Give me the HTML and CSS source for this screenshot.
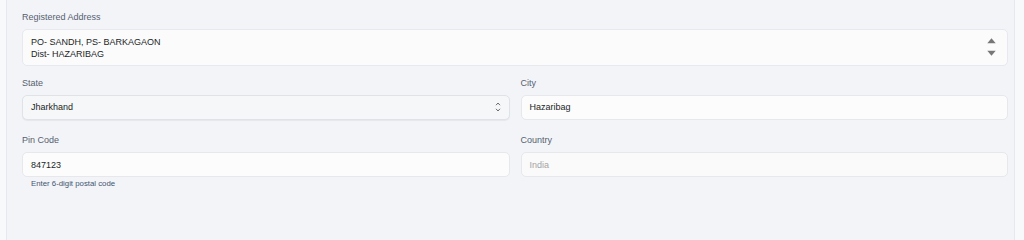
FILE: index.html
```html
<!DOCTYPE html>
<html lang="en">
<head>
<meta charset="utf-8">
<title>Address</title>
<link rel="stylesheet" href="styles.css">
</head>
<body>
<div class="panel">
  <div class="group g-first">
    <div class="label">Registered Address</div>
    <div class="textarea">
      <div class="ta-text">PO- SANDH, PS- BARKAGAON<br>Dist- HAZARIBAG</div>
      <svg class="ta-arrows" width="9" height="18" viewBox="0 0 9 18" aria-hidden="true">
        <polygon points="0.3,5.2 4.5,0.3 8.7,5.2" fill="#777"/>
        <polygon points="0.3,12.8 8.7,12.8 4.5,17.7" fill="#777"/>
      </svg>
    </div>
  </div>
  <div class="row g-second">
    <div class="group">
      <div class="label">State</div>
      <div class="select">
        <span>Jharkhand</span>
        <svg class="chev" width="6" height="12" viewBox="0 0 6 12" aria-hidden="true">
          <polyline points="1,4.2 3,2 5,4.2" fill="none" stroke="#5a5a5a" stroke-width="0.9"/>
          <polyline points="1,7.8 3,10 5,7.8" fill="none" stroke="#5a5a5a" stroke-width="0.9"/>
        </svg>
      </div>
    </div>
    <div class="group">
      <div class="label">City</div>
      <div class="input">Hazaribag</div>
    </div>
  </div>
  <div class="row">
    <div class="group">
      <div class="label">Pin Code</div>
      <div class="input">847123</div>
      <div class="help">Enter 6-digit postal code</div>
    </div>
    <div class="group">
      <div class="label">Country</div>
      <div class="input disabled">India</div>
    </div>
  </div>
</div>
</body>
</html>
```
FILE: styles.css
```css
html, body {
  margin: 0;
  padding: 0;
  background: #f8f9fb;
}
body {
  font-family: "Liberation Sans", Arial, sans-serif;
}
.panel {
  margin-left: 6px;
  width: 986px;
  min-height: 100vh;
  box-sizing: content-box;
  padding: 11.5px 6px 0 15px;
  background: #f3f4f8;
  border-left: 1px solid #e6e8ed;
  border-right: 1px solid #e6e8ed;
}
.g-first {
  margin-bottom: 12px;
}
.row {
  display: grid;
  grid-template-columns: 1fr 1fr;
  column-gap: 11px;
}
.g-second {
  margin-bottom: 15.5px;
}
.label {
  font-size: 9px;
  line-height: 11px;
  color: #565f70;
  margin-bottom: 6px;
}
.textarea {
  display: flex;
  align-items: center;
  height: 37px;
  box-sizing: border-box;
  padding: 0 11px 0 8px;
  background: #fbfbfc;
  border: 1px solid #e7e9ee;
  border-radius: 5px;
}
.ta-text {
  flex: 1;
  font-size: 9px;
  line-height: 12px;
  color: #1b1f24;
  margin-top: 1px;
}
.ta-arrows {
  display: block;
  margin-top: -1px;
}
.select {
  display: flex;
  align-items: center;
  justify-content: space-between;
  height: 25px;
  box-sizing: border-box;
  padding: 0 8px 0 8px;
  background: #f6f7f9;
  border: 1px solid #dfe2e7;
  border-radius: 5px;
  box-shadow: 0 1px 1px rgba(30, 40, 60, 0.06);
  font-size: 9px;
  color: #1b1f24;
}
.chev {
  display: block;
}
.input {
  display: flex;
  align-items: center;
  height: 25px;
  box-sizing: border-box;
  padding: 0 8px;
  background: #fcfcfd;
  border: 1px solid #e6e8ec;
  border-radius: 5px;
  font-size: 9px;
  color: #1b1f24;
}
.input.disabled {
  background: #fafafb;
  color: #a3a3a3;
}
.help {
  font-size: 7.8px;
  line-height: 9px;
  color: #3f5470;
  margin-top: 2px;
  padding-left: 9px;
}
```
